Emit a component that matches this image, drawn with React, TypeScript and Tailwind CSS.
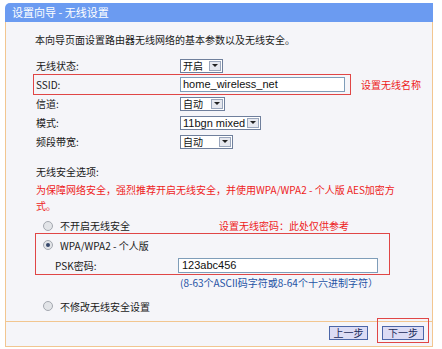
import React from 'react';

const cjk = "font-['SimSun','Noto_Sans_CJK_SC',sans-serif]";
const latin = "font-['Liberation_Sans','Arial',sans-serif]";

const Radio: React.FC<{ checked?: boolean }> = ({ checked }) => (
  <div className="w-[10px] h-[10px] rounded-full border border-[#a4a8b0] bg-[#e2e4e8] flex items-center justify-center shrink-0">
    {checked && <div className="w-[4px] h-[4px] rounded-full bg-[#34466a]" />}
  </div>
);

const Select: React.FC<{ value: string; width: string; isLatin?: boolean }> = ({ value, width, isLatin }) => (
  <div className={`${width} h-[14px] flex items-center border border-[#6f7f9c] bg-white`}>
    <span className={`flex-1 min-w-0 whitespace-nowrap pl-[2px] leading-[12px] text-[#111] ${isLatin ? `${latin} text-[11px]` : `${cjk} text-[10px]`}`}>{value}</span>
    <div className="w-[12px] h-[10px] shrink-0 mr-[1px] border border-[#9aa6bc] bg-[#e6e8ef] flex items-center justify-center">
      <div className="w-0 h-0 border-l-[3px] border-r-[3px] border-t-[3px] border-l-transparent border-r-transparent border-t-[#222]" />
    </div>
  </div>
);

const Row: React.FC<{ label: string; children: React.ReactNode }> = ({ label, children }) => (
  <div className="h-[19px] flex items-center">
    <span className="w-[146px] pl-[2px] shrink-0">{label}</span>
    {children}
  </div>
);

export default function App() {
  return (
    <div className={`w-[442px] h-[349px] bg-white pt-[3px] pl-[5px] ${cjk} text-[10px] text-[#1a1a1a]`}>
      <div className="w-[428px] h-[344px] flex flex-col">
        <div className="h-[19px] bg-[#6b9bf1] rounded-tl-[5px] flex items-center pl-[7px] text-white text-[11px]">
          设置向导 - 无线设置
        </div>
        <div className="flex-1 flex flex-col border-x border-b border-[#f2c690] bg-[#f5f5f9]">
          <div className="pl-[28px] pt-[10px]">
            <p className="h-[16px] leading-[16px] pl-[1px]">本向导页面设置路由器无线网络的基本参数以及无线安全。</p>

            <div className="mt-[8px]">
              <Row label="无线状态:">
                <Select value="开启" width="w-[43px]" />
              </Row>
              <div className="flex items-center">
                <div className="w-[316px] outline outline-1 outline-[#e04646]">
                  <Row label="SSID:">
                    <div className={`w-[165px] h-[15px] border border-[#7f9db9] bg-white pl-[2px] leading-[13px] ${latin} text-[11px] text-[#111]`}>
                      home_wireless_net
                    </div>
                  </Row>
                </div>
                <span className="ml-[11px] text-[#ee1c1c]">设置无线名称</span>
              </div>
              <Row label="信道:">
                <Select value="自动" width="w-[45px]" />
              </Row>
              <Row label="模式:">
                <Select value="11bgn mixed" width="w-[81px]" isLatin />
              </Row>
              <Row label="频段带宽:">
                <Select value="自动" width="w-[53px]" />
              </Row>
            </div>

            <p className="mt-[13px] h-[16px] leading-[16px] pl-[2px]">无线安全选项:</p>
            <p className="mt-[2px] leading-[16px] pl-[2px] text-[#ee1c1c]">
              为保障网络安全，强烈推荐开启无线安全，并使用WPA/WPA2 - 个人版 AES加密方
              <br />
              式。
            </p>

            <div className="mt-[4px] h-[15px] flex items-center">
              <div className="w-[185px] flex items-center pl-[9px]">
                <Radio />
                <span className="ml-[7px]">不开启无线安全</span>
              </div>
              <span className="text-[#ee1c1c]">设置无线密码：此处仅供参考</span>
            </div>

            <div className="ml-[1px] w-[355px] border border-[#e04646] pt-[3px] pb-[1px]">
              <div className="h-[16px] flex items-center pl-[7px]">
                <Radio checked />
                <span className="ml-[7px]">WPA/WPA2 - 个人版</span>
              </div>
              <div className="mt-[4px] h-[16px] flex items-center">
                <span className="w-[142px] pl-[19px] shrink-0">PSK密码:</span>
                <div className={`w-[200px] h-[15px] border border-[#7f9db9] bg-white pl-[3px] leading-[13px] ${latin} text-[11px] text-[#111]`}>
                  123abc456
                </div>
              </div>
            </div>

            <p className="mt-[1px] h-[14px] leading-[14px] pl-[146px] text-[#2452a4] whitespace-nowrap">(8-63个ASCII码字符或8-64个十六进制字符）</p>

            <div className="mt-[8px] h-[16px] flex items-center pl-[9px]">
              <Radio />
              <span className="ml-[7px]">不修改无线安全设置</span>
            </div>
          </div>

          <div className="mt-auto h-[25px] border-t border-[#f2c690] flex items-start justify-end pr-[3px]">
            <button className="mt-[4px] mr-[9px] w-[39px] h-[14px] border border-[#4b66a8] bg-[#dcdcf4] text-[10px] leading-[12px] text-[#1a2a5a]">
              上一步
            </button>
            <div className="-mt-[4px] border border-[#e04646] pl-[4px] pr-[4px] pt-[7px] pb-[2px]">
              <button className="block w-[42px] h-[14px] border border-[#4b66a8] bg-[#dcdcf4] text-[10px] leading-[12px] text-[#1a2a5a]">
                下一步
              </button>
            </div>
          </div>
        </div>
      </div>
    </div>
  );
}
